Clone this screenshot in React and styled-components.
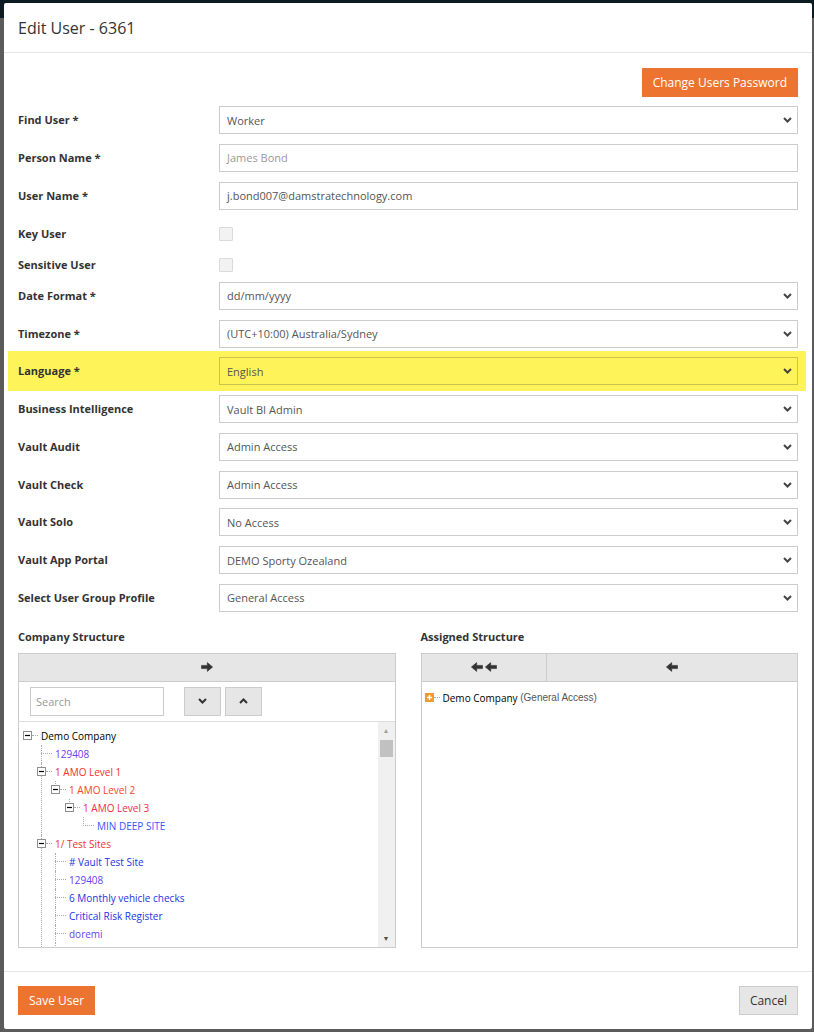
import React from 'react'
import styled, { createGlobalStyle } from 'styled-components'

const GlobalStyle = createGlobalStyle`
  html, body { margin: 0; padding: 0; }
  body {
    background: linear-gradient(#0c1a22 0, #0c1a22 18px, #5b5b5b 18px);
    font-family: 'Open Sans', 'Liberation Sans', sans-serif;
    min-height: 1032px;
  }
  * { box-sizing: border-box; }
`

const Modal = styled.div`
  margin: 3px 0 0 4px;
  width: 808px;
  height: 1026px;
  background: #fff;
  border-radius: 2px;
  display: flex;
  flex-direction: column;
`

const Header = styled.div`
  height: 50px;
  padding: 0 14px;
  display: flex;
  align-items: center;
  border-bottom: 1px solid #e5e5e5;
`

const Title = styled.h4`
  margin: 0;
  font-size: 16px;
  font-weight: 400;
  color: #333;
`

const Body = styled.div`
  flex: 1;
  padding: 15px 14px 0;
`

const TopBar = styled.div`
  display: flex;
  justify-content: flex-end;
  margin-bottom: 9px;
`

const Button = styled.button`
  height: 29px;
  padding: 0 10px;
  font-family: 'Open Sans', 'Liberation Sans', sans-serif;
  font-size: 12px;
  border: 1px solid ${p => (p.$primary ? '#ed7430' : '#ccc')};
  background: ${p => (p.$primary ? '#ed7430' : '#e6e6e6')};
  color: ${p => (p.$primary ? '#fff' : '#333')};
  border-radius: 0;
`

const FormRow = styled.div`
  display: grid;
  grid-template-columns: 201px 1fr;
  align-items: center;
  margin-bottom: 9.75px;
  ${p =>
    p.$highlight &&
    `
    background: #fff35a;
    margin: -6px -8px 3.75px -10px;
    padding: 6px 8px 6px 10px;
  `}
`

const CheckRow = styled(FormRow)`
  padding-top: 7.5px;
`

const Label = styled.label`
  font-size: 11px;
  font-weight: 700;
  line-height: 14px;
  color: #333;
`

const Field = styled.div`
  height: 28px;
  border: 1px solid ${p => (p.$highlight ? '#cdc24c' : '#ccc')};
  background: ${p => (p.$highlight ? 'transparent' : '#fff')};
  padding: 0 5px 0 7px;
  font-size: 11px;
  color: ${p => (p.$placeholder ? '#999' : '#555')};
  display: flex;
  align-items: center;
  justify-content: space-between;
`

const Checkbox = styled.span`
  display: block;
  width: 14px;
  height: 14px;
  border: 1px solid #dadada;
  background: #f2f2f2;
  border-radius: 1px;
`

const Chevron = ({ up, color = '#444' }) => (
  <svg width="9" height="6" viewBox="0 0 9 6">
    <polyline
      points={up ? '1,5 4.5,1.5 8,5' : '1,1 4.5,4.5 8,1'}
      fill="none"
      stroke={color}
      strokeWidth="2"
    />
  </svg>
)

const Arrow = ({ left }) => (
  <svg width="12" height="10" viewBox="0 0 12 10">
    <path
      d="M0.5 3.4H6.3V0.6L11.6 5L6.3 9.4V6.6H0.5Z"
      fill="#333"
      stroke="#333"
      strokeWidth="0.6"
      strokeLinejoin="round"
      transform={left ? 'translate(12 0) scale(-1 1)' : undefined}
    />
  </svg>
)

const Structure = styled.div`
  display: grid;
  grid-template-columns: 1fr 1fr;
  column-gap: 25px;
`

const SectionLabel = styled.div`
  font-size: 11px;
  font-weight: 700;
  color: #333;
  line-height: 15px;
  margin: 7px 0 9px;
`

const Panel = styled.div`
  height: 295px;
  border: 1px solid #ccc;
  display: flex;
  flex-direction: column;
`

const Bar = styled.div`
  display: flex;
  height: 28px;
  border-bottom: 1px solid #ccc;
`

const BarButton = styled.div`
  flex: ${p => p.$grow || 1};
  background: #e6e6e6;
  display: flex;
  align-items: center;
  justify-content: center;
  gap: 2px;
  & + & { border-left: 1px solid #ccc; }
`

const SearchRow = styled.div`
  height: 40px;
  display: flex;
  align-items: center;
  padding: 0 11px;
  border-bottom: 1px solid #ddd;
`

const SearchInput = styled.div`
  width: 134px;
  height: 29px;
  border: 1px solid #ccc;
  font-size: 11px;
  color: #999;
  padding-left: 5px;
  display: flex;
  align-items: center;
  margin-right: 20px;
`

const IconButton = styled.div`
  width: 37px;
  height: 29px;
  background: #e6e6e6;
  border: 1px solid #ccc;
  display: flex;
  align-items: center;
  justify-content: center;
  margin-right: 4px;
`

const TreeArea = styled.div`
  flex: 1;
  display: flex;
  overflow: hidden;
`

const TreeList = styled.ul`
  flex: 1;
  margin: 0;
  padding: 5px 0 0 8px;
  list-style: none;
  overflow: hidden;
  font-family: 'Open Sans', 'Liberation Sans', sans-serif;
  font-size: 10px;
`

const Children = styled.ul`
  list-style: none;
  margin: 0 0 0 14px;
  padding: 0;
`

const Item = styled.li`
  position: relative;
  ${p =>
    !p.$root &&
    `
    &::before {
      content: '';
      position: absolute;
      left: 0;
      top: 0;
      height: ${p.$last ? '9px' : '100%'};
      border-left: 1px dotted #aaa;
    }
  `}
`

const Row = styled.div`
  height: 18px;
  display: flex;
  align-items: center;
  white-space: nowrap;
`

const Stub = styled.span`
  width: 11px;
  margin-right: 3px;
  border-top: 1px dotted #aaa;
`

const ToggleWrap = styled.span`
  display: flex;
  align-items: center;
  margin-left: -4px;
  margin-right: 3px;
  position: relative;
  z-index: 1;
`

const Dots = styled.span`
  width: 6px;
  border-top: 1px dotted #aaa;
`

const Text = styled.span`
  color: ${p => p.$color || '#000'};
`

const Muted = styled.span`
  font-family: 'Liberation Sans', sans-serif;
  font-size: 10px;
  color: #555;
`

const Toggle = ({ plus }) => (
  <ToggleWrap>
    <svg width="9" height="9" viewBox="0 0 9 9">
      {plus ? (
        <>
          <rect x="0" y="0" width="9" height="9" fill="#f39a2e" />
          <path d="M2 4.5h5M4.5 2v5" stroke="#fff" strokeWidth="1.4" />
        </>
      ) : (
        <>
          <rect x="0.5" y="0.5" width="8" height="8" fill="#fff" stroke="#8f8f8f" />
          <path d="M2 4.5h5" stroke="#000" strokeWidth="1.2" />
        </>
      )}
    </svg>
    <Dots />
  </ToggleWrap>
)

const Scrollbar = styled.div`
  width: 17px;
  background: #f0f0f0;
  display: flex;
  flex-direction: column;
  align-items: center;
`

const ScrollArrow = styled.div`
  height: 17px;
  display: flex;
  align-items: center;
  justify-content: center;
  font-size: 7px;
  color: ${p => (p.$dim ? '#a3a3a3' : '#505050')};
  margin-top: ${p => (p.$end ? 'auto' : '0')};
`

const Thumb = styled.div`
  width: 13px;
  height: 17px;
  margin-top: 1px;
  background: #c1c1c1;
`

const AssignedBody = styled.div`
  flex: 1;
  padding: 7px 0 0 7px;
  font-family: 'Open Sans', 'Liberation Sans', sans-serif;
  font-size: 10px;
`

const Footer = styled.div`
  border-top: 1px solid #e5e5e5;
  padding: 14px 14px 14px;
  display: flex;
  justify-content: space-between;
`

const BLUE = '#2233e6'
const PURPLE = '#6a3df5'
const RED = '#f0302e'

const tree = {
  label: 'Demo Company',
  color: '#000',
  children: [
    { label: '129408', color: PURPLE },
    {
      label: '1 AMO Level 1',
      color: RED,
      children: [
        {
          label: '1 AMO Level 2',
          color: '#f5451f',
          children: [
            {
              label: '1 AMO Level 3',
              color: '#f22a44',
              children: [{ label: 'MIN DEEP SITE', color: '#3355ff' }],
            },
          ],
        },
      ],
    },
    {
      label: '1/ Test Sites',
      color: RED,
      children: [
        { label: '# Vault Test Site', color: BLUE },
        { label: '129408', color: PURPLE },
        { label: '6 Monthly vehicle checks', color: BLUE },
        { label: 'Critical Risk Register', color: BLUE },
        { label: 'doremi', color: PURPLE },
        { label: 'Evolve', color: RED, folded: true },
      ],
    },
    { label: '2 Sites', color: RED, folded: true },
  ],
}

const Node = ({ node, last, root }) => (
  <Item $last={last} $root={root}>
    <Row>
      {node.children || node.folded ? <Toggle /> : <Stub />}
      <Text $color={node.color}>{node.label}</Text>
    </Row>
    {node.children && (
      <Children>
        {node.children.map((c, i) => (
          <Node key={c.label + i} node={c} last={i === node.children.length - 1} />
        ))}
      </Children>
    )}
  </Item>
)

const rows = [
  { label: 'Find User *', value: 'Worker', select: true },
  { label: 'Person Name *', value: 'James Bond', placeholder: true },
  { label: 'User Name *', value: 'j.bond007@damstratechnology.com' },
  { label: 'Key User', check: true },
  { label: 'Sensitive User', check: true },
  { label: 'Date Format *', value: 'dd/mm/yyyy', select: true },
  { label: 'Timezone *', value: '(UTC+10:00) Australia/Sydney', select: true },
  { label: 'Language *', value: 'English', select: true, highlight: true },
  { label: 'Business Intelligence', value: 'Vault BI Admin', select: true },
  { label: 'Vault Audit', value: 'Admin Access', select: true },
  { label: 'Vault Check', value: 'Admin Access', select: true },
  { label: 'Vault Solo', value: 'No Access', select: true },
  { label: 'Vault App Portal', value: 'DEMO Sporty Ozealand', select: true },
  { label: 'Select User Group Profile', value: 'General Access', select: true },
]

export default function App() {
  return (
    <>
      <GlobalStyle />
      <Modal>
        <Header>
          <Title>Edit User - 6361</Title>
        </Header>
        <Body>
          <TopBar>
            <Button $primary>Change Users Password</Button>
          </TopBar>
          {rows.map(r =>
            r.check ? (
              <CheckRow key={r.label}>
                <Label>{r.label}</Label>
                <Checkbox />
              </CheckRow>
            ) : (
              <FormRow key={r.label} $highlight={r.highlight}>
                <Label>{r.label}</Label>
                <Field $highlight={r.highlight} $placeholder={r.placeholder}>
                  <span>{r.value}</span>
                  {r.select && <Chevron />}
                </Field>
              </FormRow>
            )
          )}
          <Structure>
            <div>
              <SectionLabel>Company Structure</SectionLabel>
              <Panel>
                <Bar>
                  <BarButton>
                    <Arrow />
                  </BarButton>
                </Bar>
                <SearchRow>
                  <SearchInput>Search</SearchInput>
                  <IconButton>
                    <Chevron color="#333" />
                  </IconButton>
                  <IconButton>
                    <Chevron up color="#333" />
                  </IconButton>
                </SearchRow>
                <TreeArea>
                  <TreeList>
                    <Node node={tree} root />
                  </TreeList>
                  <Scrollbar>
                    <ScrollArrow $dim>▲</ScrollArrow>
                    <Thumb />
                    <ScrollArrow $end>▼</ScrollArrow>
                  </Scrollbar>
                </TreeArea>
              </Panel>
            </div>
            <div>
              <SectionLabel>Assigned Structure</SectionLabel>
              <Panel>
                <Bar>
                  <BarButton>
                    <Arrow left />
                    <Arrow left />
                  </BarButton>
                  <BarButton $grow={2}>
                    <Arrow left />
                  </BarButton>
                </Bar>
                <AssignedBody>
                  <Row>
                    <Toggle plus />
                    <Text>Demo Company</Text>&nbsp;<Muted>(General Access)</Muted>
                  </Row>
                </AssignedBody>
              </Panel>
            </div>
          </Structure>
        </Body>
        <Footer>
          <Button $primary>Save User</Button>
          <Button>Cancel</Button>
        </Footer>
      </Modal>
    </>
  )
}
